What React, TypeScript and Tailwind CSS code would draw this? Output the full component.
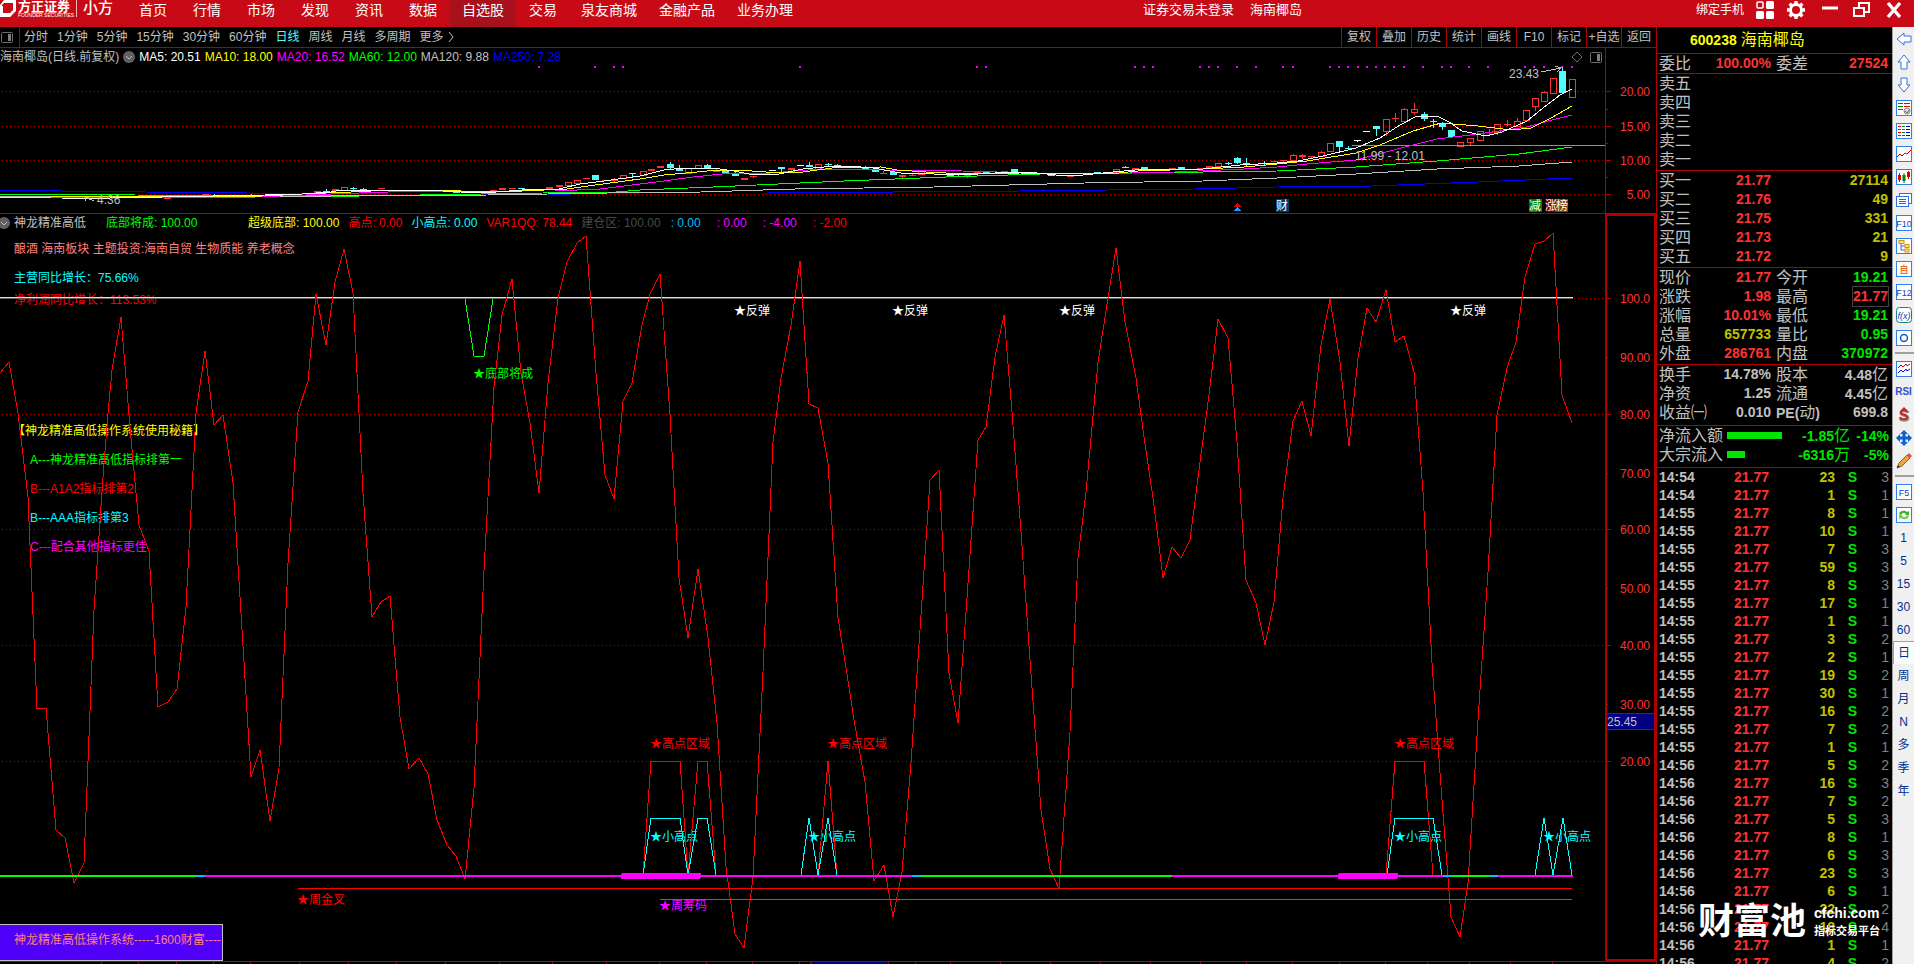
import React from "react";

type Point = [number, number];

type Label = { x: number; y: number; text: string; className: string };

// x centre, body top, body bottom, wick top, wick bottom, kind (r = up, c = down, w = flat)
type Candle = [number, number, number, number, number, "r" | "c" | "w"];

const MENU = [
  { label: "首页", width: "w-[54px]" },
  { label: "行情", width: "w-[54px]" },
  { label: "市场", width: "w-[54px]" },
  { label: "发现", width: "w-[54px]" },
  { label: "资讯", width: "w-[54px]" },
  { label: "数据", width: "w-[54px]" },
  { label: "自选股", width: "w-[66px]", active: true },
  { label: "交易", width: "w-[54px]" },
  { label: "泉友商城", width: "w-[78px]" },
  { label: "金融产品", width: "w-[78px]" },
  { label: "业务办理", width: "w-[78px]" },
];

const PERIODS = ["分时", "1分钟", "5分钟", "15分钟", "30分钟", "60分钟", "日线", "周线", "月线", "多周期"];
const TOOLS = ["复权", "叠加", "历史", "统计", "画线", "F10", "标记", "+自选", "返回"];

const AVERAGES = [
  { text: "MA5: 20.51", className: "text-white" },
  { text: "MA10: 18.00", className: "text-[#ffff00]" },
  { text: "MA20: 16.52", className: "text-[#ff00ff]" },
  { text: "MA60: 12.00", className: "text-[#00ff00]" },
  { text: "MA120: 9.88", className: "text-[#c0c0c0]" },
  { text: "MA250: 7.28", className: "text-[#0000ff]" },
];

const NAMED_VALUES = [
  { text: "超级底部: 100.00", className: "text-[#ffff00]" },
  { text: "高点: 0.00", className: "text-[#ff0000]" },
  { text: "小高点: 0.00", className: "text-[#00ffff]" },
  { text: "VAR1QQ: 78.44", className: "text-[#ff0000]" },
  { text: "建仓区: 100.00", className: "text-[#484848]" },
];

const UNNAMED_VALUES = [
  { text: ": 0.00", className: "text-[#00bfff]" },
  { text: ": 0.00", className: "text-[#ff00ff]" },
  { text: ": -4.00", className: "text-[#ff00ff]" },
  { text: ": -2.00", className: "text-[#ff0000]" },
];

const CANDLES: Candle[] = [
  [65, 198, 199, 198, 199, "c"], [167, 198, 199, 198, 199, "r"], [205, 194, 196, 194, 196, "r"], [214, 195, 196, 194, 196, "c"],
  [251, 195, 196, 194, 196, "c"], [288, 194, 196, 194, 196, "r"], [298, 194, 196, 194, 196, "r"], [317, 191, 193, 191, 193, "r"],
  [326, 191, 192, 189, 192, "c"], [335, 189, 191, 189, 191, "r"], [344, 187, 190, 187, 190, "r"], [353, 188, 189, 187, 191, "c"],
  [363, 189, 190, 188, 190, "c"], [372, 190, 191, 190, 191, "r"], [381, 188, 189, 188, 189, "r"], [456, 192, 193, 192, 193, "c"],
  [484, 192, 194, 192, 194, "r"], [493, 190, 191, 190, 191, "r"], [502, 188, 190, 188, 190, "r"], [512, 188, 189, 188, 189, "r"],
  [521, 188, 189, 188, 189, "c"], [549, 187, 189, 187, 189, "r"], [559, 185, 187, 185, 187, "r"], [568, 182, 185, 182, 186, "r"],
  [577, 180, 183, 180, 184, "r"], [586, 178, 179, 178, 179, "r"], [595, 175, 180, 175, 180, "c"], [605, 180, 181, 180, 181, "r"],
  [614, 179, 181, 178, 183, "r"], [623, 175, 178, 175, 179, "r"], [632, 173, 174, 173, 177, "c"], [643, 171, 175, 171, 175, "r"],
  [651, 169, 171, 169, 171, "r"], [660, 166, 168, 166, 168, "r"], [670, 164, 168, 162, 169, "c"], [679, 168, 171, 165, 171, "c"],
  [688, 168, 173, 168, 173, "r"], [698, 165, 168, 165, 168, "r"], [707, 165, 168, 164, 168, "c"], [716, 170, 172, 168, 172, "r"],
  [725, 170, 173, 170, 173, "c"], [735, 173, 176, 172, 176, "c"], [744, 178, 180, 178, 180, "r"], [753, 176, 177, 176, 178, "r"],
  [772, 170, 171, 170, 171, "w"], [781, 167, 169, 167, 172, "c"], [791, 168, 170, 168, 171, "r"], [800, 165, 166, 165, 166, "w"],
  [809, 165, 167, 162, 167, "c"], [818, 164, 169, 164, 169, "r"], [828, 164, 165, 163, 167, "c"], [837, 165, 167, 164, 168, "c"],
  [846, 167, 168, 167, 168, "r"], [865, 168, 169, 166, 169, "c"], [875, 169, 172, 169, 172, "c"], [883, 173, 174, 171, 174, "r"],
  [893, 172, 175, 172, 175, "c"], [902, 175, 177, 175, 178, "r"], [912, 175, 176, 173, 176, "r"], [921, 171, 174, 171, 174, "r"],
  [950, 174, 176, 174, 176, "c"], [958, 176, 177, 175, 177, "c"], [967, 175, 177, 175, 178, "r"], [977, 172, 174, 172, 174, "r"],
  [986, 172, 173, 172, 174, "c"], [995, 173, 174, 173, 174, "r"], [1004, 171, 172, 171, 172, "r"], [1014, 169, 172, 169, 172, "c"],
  [1051, 175, 176, 175, 176, "c"], [1070, 175, 177, 175, 177, "r"], [1097, 172, 173, 172, 173, "c"], [1116, 169, 172, 169, 172, "r"],
  [1125, 167, 168, 166, 168, "c"], [1135, 168, 170, 168, 170, "r"], [1144, 167, 169, 167, 170, "c"], [1153, 170, 171, 170, 171, "r"],
  [1172, 168, 169, 168, 169, "r"], [1181, 167, 169, 167, 169, "c"], [1200, 168, 169, 168, 169, "r"], [1209, 166, 168, 166, 168, "r"],
  [1218, 163, 166, 163, 167, "r"], [1228, 163, 164, 162, 165, "c"], [1237, 158, 163, 157, 164, "c"], [1246, 163, 164, 158, 166, "c"],
  [1255, 164, 165, 164, 166, "r"], [1264, 163, 164, 161, 165, "c"], [1274, 161, 162, 161, 162, "r"], [1283, 160, 161, 160, 162, "r"],
  [1293, 155, 160, 154, 161, "r"], [1302, 155, 157, 154, 159, "r"], [1311, 156, 157, 156, 158, "r"], [1321, 152, 156, 151, 157, "r"],
  [1330, 143, 151, 143, 151, "r"], [1339, 141, 147, 141, 151, "c"], [1348, 148, 149, 146, 150, "c"], [1357, 140, 141, 140, 142, "w"],
  [1366, 131, 132, 131, 132, "w"], [1376, 126, 129, 126, 136, "c"], [1386, 119, 131, 119, 136, "r"], [1395, 118, 119, 113, 122, "r"],
  [1404, 109, 121, 108, 122, "r"], [1414, 109, 112, 103, 115, "r"], [1424, 114, 119, 112, 121, "c"], [1433, 121, 122, 119, 128, "c"],
  [1442, 124, 127, 122, 130, "c"], [1451, 130, 137, 130, 138, "c"], [1460, 142, 146, 142, 147, "r"], [1470, 138, 142, 138, 146, "r"],
  [1480, 131, 140, 131, 141, "r"], [1489, 132, 133, 129, 135, "r"], [1497, 124, 132, 124, 135, "r"], [1507, 124, 125, 120, 126, "r"],
  [1517, 121, 126, 118, 126, "r"], [1526, 110, 120, 110, 121, "r"], [1535, 98, 106, 98, 111, "r"], [1544, 92, 101, 91, 102, "r"],
  [1553, 78, 93, 78, 94, "r"], [1562, 71, 93, 67, 94, "c"], [1572, 79, 97, 79, 98, "r"],
];

const MA_LINES: { color: string; points: Point[] }[] = [
  {
    color: "#0000ff",
    points: [[0, 190], [61, 191], [145, 192], [247, 193], [367, 194], [486, 194], [571, 194], [640, 193], [767, 193], [1020, 191], [1195, 189], [1277, 187], [1372, 186], [1478, 182], [1572, 178]],
  },
  {
    color: "#00ff00",
    points: [[0, 194], [135, 195], [331, 196], [359, 196], [543, 193], [616, 192], [640, 190], [713, 187], [844, 181], [946, 177], [1040, 174], [1130, 173], [1277, 171], [1356, 167], [1437, 161], [1519, 154], [1572, 147]],
  },
  {
    color: "#c0c0c0",
    points: [[0, 196], [331, 196], [488, 195], [608, 193], [701, 192], [795, 189], [934, 187], [1085, 183], [1203, 181], [1277, 178], [1356, 174], [1437, 169], [1519, 166], [1572, 162]],
  },
  {
    color: "#ff00ff",
    points: [[51, 197], [255, 197], [331, 194], [388, 192], [469, 191], [555, 191], [600, 189], [640, 184], [664, 181], [693, 177], [722, 174], [771, 173], [820, 169], [885, 170], [962, 171], [1032, 173], [1089, 174], [1175, 172], [1244, 169], [1277, 167], [1307, 164], [1356, 160], [1405, 147], [1437, 139], [1478, 134], [1527, 127], [1552, 120], [1572, 115]],
  },
  {
    color: "#ffff00",
    points: [[0, 197], [51, 197], [265, 196], [302, 194], [351, 192], [392, 190], [433, 190], [461, 191], [522, 191], [567, 189], [588, 186], [640, 179], [664, 175], [697, 172], [717, 170], [738, 170], [766, 172], [803, 172], [832, 168], [881, 167], [897, 170], [926, 172], [966, 174], [1020, 173], [1109, 174], [1138, 171], [1203, 169], [1244, 167], [1277, 164], [1307, 161], [1356, 153], [1380, 145], [1413, 131], [1441, 123], [1478, 126], [1511, 130], [1531, 128], [1551, 118], [1572, 106]],
  },
  {
    color: "#ffffff",
    points: [[63, 198], [110, 198], [265, 195], [302, 194], [331, 192], [341, 190], [425, 190], [461, 192], [496, 192], [522, 190], [559, 189], [580, 184], [604, 181], [640, 176], [652, 173], [664, 170], [685, 168], [713, 168], [734, 171], [754, 175], [779, 174], [803, 169], [824, 167], [848, 166], [873, 168], [901, 173], [934, 174], [962, 175], [995, 173], [1028, 172], [1056, 175], [1083, 175], [1113, 172], [1146, 169], [1203, 169], [1240, 165], [1277, 163], [1298, 161], [1323, 156], [1356, 148], [1380, 138], [1400, 125], [1417, 116], [1437, 116], [1449, 122], [1462, 131], [1486, 136], [1502, 132], [1527, 121], [1543, 108], [1560, 95], [1572, 89]],
  },
];

const SIGNAL_DOTS = [
  539, 595, 614, 623, 800, 977, 986, 1135, 1144, 1153, 1200, 1209, 1218, 1237, 1256, 1283, 1293, 1330, 1339, 1348, 1358,
  1367, 1376, 1385, 1394, 1404, 1423, 1442, 1451, 1469, 1488, 1525, 1534, 1544, 1562, 1572,
];

const OSCILLATOR: Point[] = [
  [0, 373], [9, 362], [18, 413], [28, 497], [37, 709], [46, 708], [56, 830], [65, 838], [74, 883], [84, 863], [94, 610], [103, 477], [108, 413], [112, 370],
  [121, 317], [130, 427], [139, 525], [149, 551], [158, 707], [168, 702], [177, 689], [186, 607], [196, 413], [205, 351], [214, 425], [223, 415],
  [233, 483], [241, 613], [251, 777], [260, 750], [270, 821], [279, 768], [288, 563], [298, 412], [308, 381], [316, 294], [326, 345], [335, 282],
  [344, 249], [353, 293], [363, 493], [372, 617], [381, 602], [390, 596], [400, 717], [409, 769], [419, 758], [428, 774], [437, 820], [447, 845],
  [456, 856], [465, 879], [474, 788], [484, 570], [494, 387], [502, 315], [512, 279], [521, 373], [530, 423], [539, 493], [548, 383], [558, 298],
  [567, 262], [577, 243], [586, 236], [596, 373], [605, 475], [614, 499], [623, 401], [632, 383], [642, 325], [650, 294], [660, 274], [670, 415],
  [679, 578], [688, 638], [698, 569], [708, 638], [717, 723], [726, 867], [735, 934], [744, 948], [753, 877], [763, 672], [773, 442], [781, 378],
  [791, 325], [800, 261], [809, 404], [818, 408], [828, 463], [838, 618], [847, 674], [854, 720], [865, 782], [874, 881], [884, 865], [893, 917],
  [902, 872], [911, 763], [921, 615], [930, 480], [939, 470], [949, 673], [958, 723], [967, 598], [978, 440], [986, 427], [995, 357], [1004, 315],
  [1012, 412], [1021, 532], [1031, 674], [1041, 810], [1050, 869], [1059, 889], [1070, 732], [1078, 558], [1086, 492], [1098, 362], [1108, 298],
  [1116, 248], [1125, 322], [1136, 378], [1144, 437], [1153, 498], [1163, 578], [1172, 547], [1181, 558], [1190, 540], [1200, 462], [1209, 395],
  [1218, 319], [1228, 338], [1237, 442], [1246, 580], [1256, 603], [1265, 645], [1274, 602], [1283, 498], [1293, 421], [1302, 401], [1311, 436],
  [1321, 345], [1330, 299], [1340, 362], [1349, 446], [1358, 358], [1367, 308], [1376, 322], [1386, 290], [1395, 342], [1404, 336], [1414, 372],
  [1423, 492], [1432, 663], [1442, 800], [1451, 917], [1460, 937], [1468, 883], [1478, 720], [1488, 572], [1497, 415], [1507, 368], [1516, 342],
  [1525, 277], [1535, 244], [1544, 241], [1553, 233], [1562, 395], [1572, 423],
];

const HIGH_ZONES: Point[][] = [
  [[643, 875], [651, 761], [680, 761], [688, 875], [698, 761], [707, 761], [716, 875]],
  [[818, 875], [828, 761], [837, 875]],
  [[1386, 875], [1395, 761], [1424, 761], [1433, 875]],
];

const SMALL_HIGHS: Point[][] = [
  [[643, 875], [651, 818], [680, 818], [688, 875], [698, 818], [707, 818], [716, 875]],
  [[801, 875], [809, 818], [818, 875], [828, 818], [837, 875]],
  [[1387, 875], [1395, 818], [1433, 818], [1442, 875]],
  [[1535, 875], [1544, 818], [1553, 875], [1563, 818], [1572, 875]],
];

const BASE_LINE: [number, number, string][] = [
  [0, 196, "#00ff00"],
  [196, 205, "#00bfff"],
  [205, 912, "#ff00ff"],
  [912, 921, "#00bfff"],
  [921, 1172, "#00ff00"],
  [1172, 1443, "#ff00ff"],
  [1443, 1452, "#00bfff"],
  [1452, 1489, "#00ff00"],
  [1489, 1498, "#00bfff"],
  [1498, 1573, "#ff00ff"],
];

const LABELS: Label[] = [
  { x: 14, y: 253, text: "酿酒 海南板块 主题投资:海南自贸 生物质能 养老概念", className: "fill-[#ff8080]" },
  { x: 14, y: 282, text: "主营同比增长：75.66%", className: "fill-[#00ffff]" },
  { x: 14, y: 304, text: "净利润同比增长：113.53%", className: "fill-[#ff0000]" },
  { x: 13, y: 435, text: "【神龙精准高低操作系统使用秘籍】", className: "fill-[#ffff00]" },
  { x: 30, y: 464, text: "A---神龙精准高低指标排第一", className: "fill-[#00ff00]" },
  { x: 30, y: 493, text: "B---A1A2指标排第2", className: "fill-[#ff0000]" },
  { x: 30, y: 522, text: "B---AAA指标排第3", className: "fill-[#00ffff]" },
  { x: 30, y: 551, text: "C---配合其他指标更佳", className: "fill-[#ff00ff]" },
  { x: 473, y: 378, text: "★底部将成", className: "fill-[#00ff00]" },
  { x: 734, y: 315, text: "★反弹", className: "fill-white" },
  { x: 892, y: 315, text: "★反弹", className: "fill-white" },
  { x: 1059, y: 315, text: "★反弹", className: "fill-white" },
  { x: 1450, y: 315, text: "★反弹", className: "fill-white" },
  { x: 650, y: 748, text: "★高点区域", className: "fill-[#ff0000]" },
  { x: 827, y: 748, text: "★高点区域", className: "fill-[#ff0000]" },
  { x: 1394, y: 748, text: "★高点区域", className: "fill-[#ff0000]" },
  { x: 650, y: 841, text: "★小高点", className: "fill-[#00ffff]" },
  { x: 808, y: 841, text: "★小高点", className: "fill-[#00ffff]" },
  { x: 1394, y: 841, text: "★小高点", className: "fill-[#00ffff]" },
  { x: 1543, y: 841, text: "★小高点", className: "fill-[#00ffff]" },
  { x: 297, y: 904, text: "★周金叉", className: "fill-[#ff0000]" },
  { x: 659, y: 910, text: "★周筹码", className: "fill-[#ff00ff]" },
];

const DATE_TICKS = [
  101, 138, 176, 213, 250, 299, 348, 396, 445, 499, 552, 606, 659, 706, 752, 799, 810, 888, 915, 950, 1000, 1050, 1100,
  1150, 1200, 1246, 1292, 1339, 1385, 1427, 1469, 1510, 1552,
];

const SELL = ["卖五", "卖四", "卖三", "卖二", "卖一"];

const BUY = [
  ["买一", "21.77", "27114"],
  ["买二", "21.76", "49"],
  ["买三", "21.75", "331"],
  ["买四", "21.73", "21"],
  ["买五", "21.72", "9"],
];

const RED = "text-[#ff3232]";
const GREEN = "text-[#00e600]";
const YELLOW = "text-[#c0c000]";
const GRAY = "text-[#c0c0c0]";

const QUOTE = [
  ["现价", "21.77", RED, "今开", "19.21", GREEN],
  ["涨跌", "1.98", RED, "最高", "21.77", RED],
  ["涨幅", "10.01%", RED, "最低", "19.21", GREEN],
  ["总量", "657733", YELLOW, "量比", "0.95", GREEN],
  ["外盘", "286761", RED, "内盘", "370972", GREEN],
];

const FUNDAMENTALS = [
  ["换手", "14.78%", GRAY, "股本", "4.48亿", GRAY],
  ["净资", "1.25", GRAY, "流通", "4.45亿", GRAY],
  ["收益㈠", "0.010", GRAY, "PE(动)", "699.8", GRAY],
];

const TICKS: [string, number, number][] = [
  ["14:54", 23, 3], ["14:54", 1, 1], ["14:55", 8, 1], ["14:55", 10, 1], ["14:55", 7, 3], ["14:55", 59, 3], ["14:55", 8, 3],
  ["14:55", 17, 1], ["14:55", 1, 1], ["14:55", 3, 2], ["14:55", 2, 1], ["14:55", 19, 2], ["14:55", 30, 1], ["14:55", 16, 2],
  ["14:55", 7, 2], ["14:55", 1, 1], ["14:56", 5, 2], ["14:56", 16, 3], ["14:56", 7, 2], ["14:56", 5, 3], ["14:56", 8, 1],
  ["14:56", 6, 3], ["14:56", 23, 3], ["14:56", 6, 1], ["14:56", 22, 2], ["14:56", 18, 4], ["14:56", 1, 1], ["14:56", 4, 2],
];

const toPath = (points: Point[]) => points.map((p) => p.join(",")).join(" ");

function Logo() {
  return (
    <div className="flex h-[18px] w-[126px] items-start text-white">
      <svg className="h-[18px] w-4" viewBox="0 0 16 18">
        <path d="M4 0H16V11L10 17H0V5L4 0Z" fill="#fff" />
        <path d="M2 5L4 3H13V10L10 13H2Z" fill="#c80a16" />
        <path d="M0 6V17H10L12 14H3V6Z" fill="#fff" />
      </svg>
      <div className="ml-0.5 w-[52px]">
        <div className="text-[13px] font-bold leading-[13px]">方正证券</div>
        <div className="whitespace-nowrap text-[5px] leading-[5px]">FOUNDER SECURITIES</div>
      </div>
      <div className="ml-1.5 h-[17px] w-px bg-white/70" />
      <div className="ml-1.5 text-[15px] font-medium leading-4">小方</div>
    </div>
  );
}

function Header() {
  return (
    <header className="flex h-[27px] shrink-0 items-start bg-[#c80a16] text-white">
      <Logo />
      <nav className="flex h-full">
        {MENU.map((item) => (
          <a
            key={item.label}
            href="#"
            className={`${item.width} h-full text-center text-sm leading-5 ${item.active ? "bg-[#a8101c]" : ""}`}
          >
            {item.label}
          </a>
        ))}
      </nav>
      <div className="flex flex-1 items-center justify-end gap-4 whitespace-nowrap pr-[394px] text-[13px] leading-5">
        <span>证券交易未登录</span>
        <span>海南椰岛</span>
      </div>
      <div className="flex h-5 items-center gap-3 pr-[11px]">
        <button className="text-xs">绑定手机</button>
        <button aria-label="面板">
          <svg className="size-[18px]" viewBox="0 0 18 18" fill="#fff">
            <rect x="1" y="1" width="6" height="6" rx="1" fill="none" stroke="#fff" strokeWidth="1.5" />
            <rect x="10" y="0" width="8" height="8" rx="1.5" />
            <rect x="0" y="10" width="8" height="8" rx="1.5" />
            <rect x="10" y="10" width="8" height="8" rx="1.5" />
          </svg>
        </button>
        <button aria-label="设置">
          <svg className="size-5" viewBox="0 0 20 20" fill="none" stroke="#fff">
            <circle cx="10" cy="10" r="5.5" strokeWidth="3" />
            <path d="M10 1V4M10 16V19M1 10H4M16 10H19M3.6 3.6L6 6M14 14L16.4 16.4M3.6 16.4L6 14M14 6L16.4 3.6" strokeWidth="3.4" />
          </svg>
        </button>
        <div className="ml-1 flex items-center gap-[15px]">
          <button aria-label="最小化">
            <svg className="size-4" viewBox="0 0 16 16">
              <path d="M0 6H16" stroke="#fff" strokeWidth="3" />
            </svg>
          </button>
          <button aria-label="还原">
            <svg className="h-4 w-[17px]" viewBox="0 0 17 16" fill="none" stroke="#fff" strokeWidth="2">
              <rect x="1" y="6" width="10" height="8" />
              <path d="M6 5V1H16V10H12" />
            </svg>
          </button>
          <button aria-label="关闭">
            <svg className="size-[18px]" viewBox="0 0 18 16">
              <path d="M3 1L15 15M15 1L3 15" stroke="#fff" strokeWidth="3.4" />
            </svg>
          </button>
        </div>
      </div>
    </header>
  );
}

function PanelIcon() {
  return (
    <svg className="h-[11px] w-3 shrink-0" viewBox="0 0 12 11">
      <rect x="0.5" y="0.5" width="11" height="10" rx="1" fill="none" stroke="#707070" />
      <rect x="7" y="2" width="3" height="7" fill="#808080" />
    </svg>
  );
}

function RoundArrow() {
  return (
    <svg className="size-3 shrink-0" viewBox="0 0 12 12">
      <circle cx="6" cy="6" r="6" fill="#606060" />
      <path d="M3 5L6 8L9 5" fill="none" stroke="#c0c0c0" />
    </svg>
  );
}

function Toolbar() {
  return (
    <div className="flex h-[21px] shrink-0 items-stretch border-b border-[#b00000] text-xs leading-5">
      <div className="flex w-5 items-center border-r border-[#b00000] pl-px">
        <PanelIcon />
      </div>
      <div className="flex gap-[9px] pl-1">
        {PERIODS.map((p) => (
          <button key={p} className={p === "日线" ? "text-[#54fcfc]" : ""}>
            {p}
          </button>
        ))}
        <button className="flex items-center gap-1">
          更多
          <svg className="h-2.5 w-1.5" viewBox="0 0 6 10">
            <path d="M1 0L5 5L1 10" fill="none" stroke="#c0c0c0" />
          </svg>
        </button>
      </div>
      <div className="ml-auto flex">
        {TOOLS.map((t) => (
          <button key={t} className="w-[35px] whitespace-nowrap border-l border-[#b00000] text-center">
            {t}
          </button>
        ))}
      </div>
    </div>
  );
}

function CandleShape({ candle }: { candle: Candle }) {
  const [x, top, bottom, high, low, kind] = candle;
  const color = kind === "r" ? "#ff3232" : kind === "c" ? "#54fcfc" : "#ffffff";
  const hollow = kind === "r" && bottom - top > 2;
  return (
    <g stroke={color}>
      {high < top && <path d={`M${x + 0.5} ${high}V${top}`} />}
      {low > bottom && <path d={`M${x + 0.5} ${bottom}V${low}`} />}
      {hollow ? (
        <rect x={x - 2.5} y={top + 0.5} width="6" height={bottom - top} fill="none" />
      ) : (
        <rect x={x - 3} y={top} width="7" height={Math.max(bottom - top, 1)} fill={color} stroke="none" />
      )}
    </g>
  );
}

function PriceChart() {
  return (
    <div className="flex h-[166px] shrink-0 border-b border-[#b00000]">
      <div className="relative min-w-0 flex-1">
        <svg className="block h-full w-full text-xs" viewBox="0 48 1605 165" preserveAspectRatio="xMinYMin slice" shapeRendering="crispEdges">
          {[91, 126, 160, 194].map((y) => (
            <path key={y} d={`M2 ${y + 0.5}H1605`} stroke="#b00000" strokeDasharray="1 3" />
          ))}
          {SIGNAL_DOTS.map((x) => (
            <rect key={x} x={x - 1} y="66" width="2" height="2" fill="#ff00ff" />
          ))}
          {CANDLES.map((c) => (
            <CandleShape key={c[0]} candle={c} />
          ))}
          <path d="M1352 145.5H1605" stroke="#909090" />
          {MA_LINES.map((line) => (
            <polyline key={line.color} points={toPath(line.points)} fill="none" stroke={line.color} />
          ))}
          <g fill="none" stroke="#c0c0c0">
            <path d="M1541 72L1561 68M1555 66L1561 68L1557 72" />
            <path d="M94 201L85 197M85 201V197H89" />
            <path d="M1577 52L1582 57L1577 62L1572 57Z" stroke="#707070" />
          </g>
          <text x="1509" y="78" fill="#c0c0c0">23.43</text>
          <text x="97" y="204" fill="#c0c0c0">4.36</text>
          <text x="1355" y="160" fill="#c0c0c0">11.99 - 12.01</text>
          <path d="M1237 203L1241 207H1233Z" fill="#e00000" />
          <path d="M1237 207L1241 211H1233Z" fill="#3090ff" />
          <rect x="1276" y="199" width="13" height="13" fill="#003a70" />
          <rect x="1529" y="199" width="13" height="13" fill="#008000" />
          <rect x="1546" y="199" width="10" height="13" fill="#800000" />
          <rect x="1555" y="199" width="13" height="13" fill="#804000" />
          <g fill="#ffffff">
            <text x="1276" y="210">财</text>
            <text x="1529" y="210">减</text>
            <text x="1545" y="210">涨</text>
            <text x="1556" y="210">榜</text>
          </g>
        </svg>
        <div className="absolute inset-x-0 top-0 flex h-[18px] items-center gap-1 whitespace-nowrap text-xs">
          <span>海南椰岛(日线.前复权)</span>
          <RoundArrow />
          {AVERAGES.map((a) => (
            <span key={a.text} className={a.className}>
              {a.text}
            </span>
          ))}
          <span className="ml-auto pr-[3px]">
            <PanelIcon />
          </span>
        </div>
      </div>
      <svg className="block h-full w-[51px] shrink-0 text-xs" viewBox="1605 48 51 165">
        <g stroke="#b00000">
          <path d="M1605.5 48V213" />
          <path d="M1605 91.5H1611M1605 126.5H1611M1605 160.5H1611M1605 194.5H1611" />
          <path d="M1605 109.5H1608M1605 143.5H1608M1605 177.5H1608" />
        </g>
        <g fill="#ff3232" textAnchor="end">
          <text x="1650" y="96">20.00</text>
          <text x="1650" y="131">15.00</text>
          <text x="1650" y="165">10.00</text>
          <text x="1650" y="199">5.00</text>
        </g>
      </svg>
    </div>
  );
}

const AXIS: [number, string][] = [
  [298, "100.0"],
  [357, "90.00"],
  [414, "80.00"],
  [473, "70.00"],
  [529, "60.00"],
  [588, "50.00"],
  [645, "40.00"],
  [704, "30.00"],
  [761, "20.00"],
];

function IndicatorChart() {
  return (
    <div className="flex min-h-0 flex-1">
      <div className="relative min-w-0 flex-1">
        <svg className="block h-full w-full text-xs" viewBox="0 214 1605 747" preserveAspectRatio="xMinYMin slice" shapeRendering="crispEdges">
          {[298, 414, 529, 645, 761].map((y) => (
            <path key={y} d={`M2 ${y + 0.5}H1605`} stroke="#b00000" strokeDasharray="1 3" />
          ))}
          {LABELS.map((l) => (
            <text key={`${l.x}-${l.y}`} x={l.x} y={l.y} className={l.className}>
              {l.text}
            </text>
          ))}
          <path d="M0 297.5H1573" stroke="#ffff00" />
          <path d="M0 298.5H1573" stroke="#606060" />
          <polyline points="465,299 474,356 484,356 493,299" fill="none" stroke="#00ff00" />
          <polyline points={toPath(OSCILLATOR)} fill="none" stroke="#ff0000" />
          {HIGH_ZONES.map((z, i) => (
            <polyline key={i} points={toPath(z)} fill="none" stroke="#ff0000" />
          ))}
          {SMALL_HIGHS.map((z, i) => (
            <polyline key={i} points={toPath(z)} fill="none" stroke="#00ffff" />
          ))}
          {BASE_LINE.map(([from, to, color]) => (
            <path key={from} d={`M${from} 876H${to}`} stroke={color} strokeWidth="2" />
          ))}
          <rect x="621" y="873" width="80" height="6" rx="2" fill="#ff00ff" />
          <rect x="1338" y="873" width="60" height="6" rx="2" fill="#ff00ff" />
          <path d="M298 888.5H1572" stroke="#ff0000" />
          <path d="M660 899.5H1572" stroke="#ff00ff" />
          <rect x="-1" y="924.5" width="223" height="36" fill="#5000f8" stroke="#c0c0c0" />
          <text x="14" y="944" fill="#ff8080">神龙精准高低操作系统-----1600财富----</text>
        </svg>
        <div className="absolute inset-x-0 top-0 flex h-[17px] items-center whitespace-nowrap text-xs">
          <span className="-ml-0.5 mr-1 flex">
            <RoundArrow />
          </span>
          <span className="w-[92px]">神龙精准高低</span>
          <span className="w-[142px] text-[#00ff00]">底部将成: 100.00</span>
          <div className="flex gap-[9px]">
            {NAMED_VALUES.map((v) => (
              <span key={v.text} className={v.className}>
                {v.text}
              </span>
            ))}
          </div>
          <div className="ml-2.5 flex gap-4">
            {UNNAMED_VALUES.map((v, i) => (
              <span key={i} className={v.className}>
                {v.text}
              </span>
            ))}
          </div>
        </div>
      </div>
      <div className="w-[51px] shrink-0 border-2 border-[#b00000]">
        <svg className="block h-full w-full text-xs" viewBox="1607 216 47 743" preserveAspectRatio="xMinYMin slice">
          {AXIS.map(([y, label], i) => (
            <g key={label}>
              <path d={`M1605 ${y + 0.5}H${i % 2 ? 1608 : 1611}`} stroke="#b00000" />
              <text x="1650" y={y + 5} textAnchor="end" fill="#ff3232">
                {label}
              </text>
            </g>
          ))}
          <rect x="1605" y="713.5" width="52" height="16" fill="#000080" stroke="#b00000" />
          <text x="1607" y="726" fill="#c0c0c0">25.45</text>
        </svg>
      </div>
    </div>
  );
}

function DateAxis() {
  return (
    <svg className="block h-[3px] w-full shrink-0" viewBox="0 961 1656 3" preserveAspectRatio="xMinYMin slice" shapeRendering="crispEdges">
      <rect x="811" y="962" width="77" height="2" fill="#000080" />
      <path d="M0 961.5H1656" stroke="#b00000" />
      {DATE_TICKS.map((x) => (
        <path key={x} d={`M${x + 0.5} 961V964`} stroke="#b00000" />
      ))}
    </svg>
  );
}

// Digits are bold, a trailing unit such as 亿 or 万 is larger and regular
function Amount({ value }: { value: string }) {
  const unit = /[亿万]$/.test(value) ? value.slice(-1) : "";
  return (
    <>
      {unit ? value.slice(0, -1) : value}
      {unit && <span className="text-base font-normal leading-[19px]">{unit}</span>}
    </>
  );
}

function QuoteRow({ row }: { row: string[] }) {
  const [nameA, valueA, colorA, nameB, valueB, colorB] = row;
  const boxed = nameB === "最高";
  return (
    <div className="grid h-[19px] grid-cols-[112px_1fr] gap-x-[5px] leading-[19px]">
      <div className="flex justify-between">
        <span className="text-base leading-[19px]">{nameA}</span>
        <span className={`text-sm font-bold leading-[19px] ${colorA}`}>{valueA}</span>
      </div>
      <div className="flex justify-between whitespace-nowrap">
        {nameB.startsWith("PE") ? (
          <span className="text-sm font-bold leading-[19px]">
            PE(<span className="text-base font-normal leading-[19px]">动</span>)
          </span>
        ) : (
          <span className="text-base leading-[19px]">{nameB}</span>
        )}
        <span className={`text-sm font-bold leading-[19px] ${colorB} ${boxed ? "outline outline-[#404040]" : ""}`}>
          <Amount value={valueB} />
        </span>
      </div>
    </div>
  );
}

function FlowRow({ name, bar, amount, percent }: { name: string; bar: number; amount: string; percent: string }) {
  return (
    <div className="flex h-[19px] items-center whitespace-nowrap text-sm font-bold text-[#00e600]">
      <span className="w-[68px] text-base font-normal leading-[19px] text-[#c0c0c0]">{name}</span>
      <span className="h-[7px] bg-[#00e600]" style={{ width: bar }} />
      <span className="ml-auto leading-[19px]">
        <Amount value={amount} />
      </span>
      <span className="w-[39px] text-right">{percent}</span>
    </div>
  );
}

function Watermark() {
  return (
    <div className="absolute bottom-[22px] left-[41px] flex items-center gap-2 whitespace-nowrap font-bold text-white">
      <span className="text-4xl leading-10">财富池</span>
      <div>
        <div className="text-sm leading-[18px]">cfchi.com</div>
        <div className="text-[11px] leading-[18px]">指标交易平台</div>
      </div>
    </div>
  );
}

function QuotePanel() {
  return (
    <aside className="relative flex w-[236px] shrink-0 flex-col overflow-hidden border-l border-[#b00000]">
      <div className="flex h-[27px] shrink-0 items-center gap-1 border-b border-[#b00000] pl-[33px] text-[#ffff00]">
        <span className="text-sm font-bold">600238</span>
        <span className="text-base leading-6">海南椰岛</span>
      </div>
      <div className="h-5 shrink-0 border-b border-[#b00000] pl-0.5 pr-1">
        <QuoteRow row={["委比", "100.00%", RED, "委差", "27524", RED]} />
      </div>
      <div className="shrink-0 border-b border-[#b00000] pb-px pl-0.5 pr-1">
        {SELL.map((name) => (
          <div key={name} className="h-[19px] text-base leading-[19px]">
            {name}
          </div>
        ))}
      </div>
      <div className="shrink-0 border-b border-[#b00000] pb-px pl-0.5 pr-1">
        {BUY.map(([name, price, volume]) => (
          <QuoteRow key={name} row={[name, price, RED, "", volume, YELLOW]} />
        ))}
      </div>
      <div className="shrink-0 border-b border-[#b00000] pb-px pl-0.5 pr-1">
        {QUOTE.map((row) => (
          <QuoteRow key={row[0]} row={row} />
        ))}
      </div>
      <div className="shrink-0 border-b border-[#b00000] pb-[3px] pl-0.5 pr-1">
        {FUNDAMENTALS.map((row) => (
          <QuoteRow key={row[0]} row={row} />
        ))}
      </div>
      <div className="shrink-0 border-b border-[#b00000] pb-[3px] pl-0.5 pr-[3px]">
        <FlowRow name="净流入额" bar={55} amount="-1.85亿" percent="-14%" />
        <FlowRow name="大宗流入" bar={18} amount="-6316万" percent="-5%" />
      </div>
      <div className="min-h-0 flex-1 overflow-hidden pl-0.5 pr-[3px]">
        <table className="w-full table-fixed text-sm font-bold">
          <tbody>
            {TICKS.map(([time, volume, count], i) => (
              <tr key={i} className="h-[18px] leading-[18px]">
                <td className="w-[50px] p-0">{time}</td>
                <td className={`w-[60px] p-0 text-right ${RED}`}>21.77</td>
                <td className={`w-[66px] p-0 text-right ${YELLOW}`}>{volume}</td>
                <td className={`w-[22px] p-0 text-right ${GREEN}`}>S</td>
                <td className="p-0 text-right font-normal text-[#808080]">{count}</td>
              </tr>
            ))}
          </tbody>
        </table>
      </div>
      <Watermark />
    </aside>
  );
}

function Boxed({ children }: { children?: React.ReactNode }) {
  return (
    <svg className="size-4" viewBox="0 0 16 16" fill="none">
      <rect x="0.5" y="0.5" width="15" height="15" fill="#fff" stroke="#3080e8" />
      {children}
    </svg>
  );
}

function BoxedText({ text, color = "fill-[#1040c0]" }: { text: string; color?: string }) {
  return (
    <Boxed>
      <text x="8" y="12" textAnchor="middle" className={`text-[9px] ${color}`}>
        {text}
      </text>
    </Boxed>
  );
}

const UP_ARROW = "M8 1L14 8H11V15H5V8H2Z";

const SIDE_ICONS: { name: string; icon: React.ReactNode }[] = [
  {
    name: "后退",
    icon: (
      <svg className="size-4" viewBox="0 0 16 16" fill="#fff" stroke="#3070e0">
        <path d={UP_ARROW} transform="rotate(-90 8 8)" />
      </svg>
    ),
  },
  {
    name: "上一个",
    icon: (
      <svg className="size-4" viewBox="0 0 16 16" fill="#fff" stroke="#3070e0">
        <path d={UP_ARROW} />
      </svg>
    ),
  },
  {
    name: "下一个",
    icon: (
      <svg className="size-4" viewBox="0 0 16 16" fill="#fff" stroke="#3070e0">
        <path d={UP_ARROW} transform="rotate(180 8 8)" />
      </svg>
    ),
  },
  {
    name: "自选报价",
    icon: (
      <Boxed>
        <path d="M2 3.5H7M2 6.5H7M2 9.5H7" stroke="#008000" />
        <path d="M8 3.5H14M8 6.5H14" stroke="#e00000" />
        <circle cx="11" cy="11" r="3" fill="#ddd" stroke="#888" />
        <path d="M9 11L11 13L14 9" stroke="#666" />
      </Boxed>
    ),
  },
  {
    name: "行情列表",
    icon: (
      <Boxed>
        <path d="M2 3.5H5M2 6.5H5M2 9.5H5M2 12.5H5" stroke="#e00000" />
        <path d="M6 3.5H9M6 6.5H9M6 9.5H9M6 12.5H9" stroke="#008000" />
        <path d="M10 3.5H14M10 6.5H14M10 9.5H14M10 12.5H14" stroke="#0000e0" />
      </Boxed>
    ),
  },
  {
    name: "分时图",
    icon: (
      <Boxed>
        <path d="M1 11L4 8L6 10L9 7L11 8L15 4" stroke="#e00000" />
      </Boxed>
    ),
  },
  {
    name: "K线图",
    icon: (
      <Boxed>
        <path d="M3.5 4V13M12.5 2V10" stroke="#e00000" />
        <path d="M8 4V14" stroke="#008000" />
        <rect x="2" y="6" width="3" height="5" fill="#e00000" />
        <rect x="6.5" y="6" width="3" height="6" fill="#008000" />
        <rect x="11" y="3" width="3" height="5" fill="#e00000" />
      </Boxed>
    ),
  },
  {
    name: "资料",
    icon: (
      <svg className="size-4" viewBox="0 0 16 16" fill="#fff" stroke="#3070e0">
        <rect x="3.5" y="1.5" width="12" height="10" />
        <rect x="0.5" y="4.5" width="12" height="10" />
        <path d="M3 7.5H10M3 9.5H10M3 11.5H10" stroke="#606060" />
      </svg>
    ),
  },
  { name: "F10", icon: <BoxedText text="F10" /> },
  {
    name: "板块",
    icon: (
      <Boxed>
        <path d="M5 5V12H9M5 8H9" stroke="#3070e0" />
        <rect x="3" y="2.5" width="5" height="3" fill="#ffe080" stroke="#e09000" />
        <rect x="9" y="6.5" width="4" height="3" fill="#ffe080" stroke="#e09000" />
        <rect x="9" y="11" width="4" height="3" fill="#ffe080" stroke="#e09000" />
      </Boxed>
    ),
  },
  { name: "自选", icon: <BoxedText text="自" color="fill-[#f07030] font-bold" /> },
  { name: "F12", icon: <BoxedText text="F12" /> },
  {
    name: "公式",
    icon: (
      <svg className="size-4" viewBox="0 0 16 16">
        <rect x="0.5" y="0.5" width="15" height="15" rx="3" fill="#fff" stroke="#108080" />
        <text x="8" y="12" textAnchor="middle" className="fill-[#1040c0] text-[9px] italic">
          f(x)
        </text>
      </svg>
    ),
  },
  {
    name: "圆",
    icon: (
      <Boxed>
        <circle cx="8" cy="8" r="3.5" stroke="#1060c0" strokeWidth="1.5" />
      </Boxed>
    ),
  },
];

const DRAW_ICONS: { name: string; icon: React.ReactNode }[] = [
  {
    name: "多股同列",
    icon: (
      <Boxed>
        <path d="M2 7L5 4L7 6L10 3L11 5L14 3" stroke="#e00000" />
        <path d="M2 12L5 9L7 11L10 8L11 10L14 8" stroke="#0000e0" />
      </Boxed>
    ),
  },
  {
    name: "RSI",
    icon: <span className="text-[10px] font-bold text-[#3050d0]">RSI</span>,
  },
  {
    name: "资金",
    icon: (
      <svg className="size-4" viewBox="0 0 16 16" fill="none">
        <path d="M12 6C11 3 5 3 5 6C5 9 12 8 12 11C12 14 5 14 4 11" stroke="#909090" strokeWidth="3" />
        <path d="M11 5C10 2 4 3 5 6C5 8 11 7 11 10C11 13 5 13 4 10" stroke="#d02020" strokeWidth="2" />
        <path d="M8 0L11 3H5Z" fill="#d02020" />
      </svg>
    ),
  },
  {
    name: "移动",
    icon: (
      <svg className="size-4" viewBox="0 0 16 16" fill="#1060d0">
        <path d="M8 0L12 4H9.500V6.500H12V4L16 8L12 12V9.500H9.500V12H12L8 16L4 12H6.500V9.500H4V12L0 8L4 4V6.500H6.500V4H4Z" />
      </svg>
    ),
  },
  {
    name: "画线",
    icon: (
      <svg className="size-4" viewBox="0 0 16 16">
        <path d="M1 15L3 10L11 2L14 5L6 13Z" fill="#f0a040" stroke="#a06020" />
        <path d="M11 2L13 0L16 3L14 5Z" fill="#e05050" />
        <path d="M1 15L2 12L4 14Z" fill="#303030" />
      </svg>
    ),
  },
];

const PERIOD_KEYS = ["1", "5", "15", "30", "60", "日", "周", "月", "N", "多", "季", "年"];

function SideStrip() {
  const button = "flex h-[23px] w-full items-center justify-center";
  return (
    <aside className="flex w-[22px] shrink-0 flex-col overflow-hidden border-l border-[#a0a0a0] bg-[#f0f0f0]">
      {SIDE_ICONS.map((item) => (
        <button key={item.name} aria-label={item.name} className={button}>
          {item.icon}
        </button>
      ))}
      <hr className="my-[3px] ml-0.5 border-t-2 border-[#a0a0a0]" />
      {DRAW_ICONS.map((item) => (
        <button key={item.name} aria-label={item.name} className={button}>
          {item.icon}
        </button>
      ))}
      <hr className="my-[3px] ml-0.5 border-t-2 border-[#a0a0a0]" />
      <button aria-label="F5" className={button}>
        <BoxedText text="F5" />
      </button>
      <button aria-label="刷新" className={button}>
        <Boxed>
          <path d="M3 7C4 3 9 3 11 5L13 4V8H9L10 7C8 5 6 6 5 8Z" fill="#40b030" />
          <path d="M13 9C12 13 7 13 5 11L3 12V8H7L6 9C8 11 10 10 11 8Z" fill="#70d050" />
        </Boxed>
      </button>
      {PERIOD_KEYS.map((key) => (
        <button
          key={key}
          className={`${button} text-xs text-[#003090] ${key === "日" ? "border-l border-t border-[#a0a0a0] bg-[#fafafa]" : ""}`}
        >
          {key}
        </button>
      ))}
    </aside>
  );
}

export default function App() {
  return (
    <div className="flex h-screen flex-col overflow-hidden bg-black font-['Liberation_Sans','Noto_Sans_CJK_SC',sans-serif] text-[#c0c0c0]">
      <Header />
      <div className="flex min-h-0 flex-1">
        <main className="flex min-w-0 flex-1 flex-col">
          <Toolbar />
          <PriceChart />
          <IndicatorChart />
          <DateAxis />
        </main>
        <QuotePanel />
        <SideStrip />
      </div>
    </div>
  );
}
